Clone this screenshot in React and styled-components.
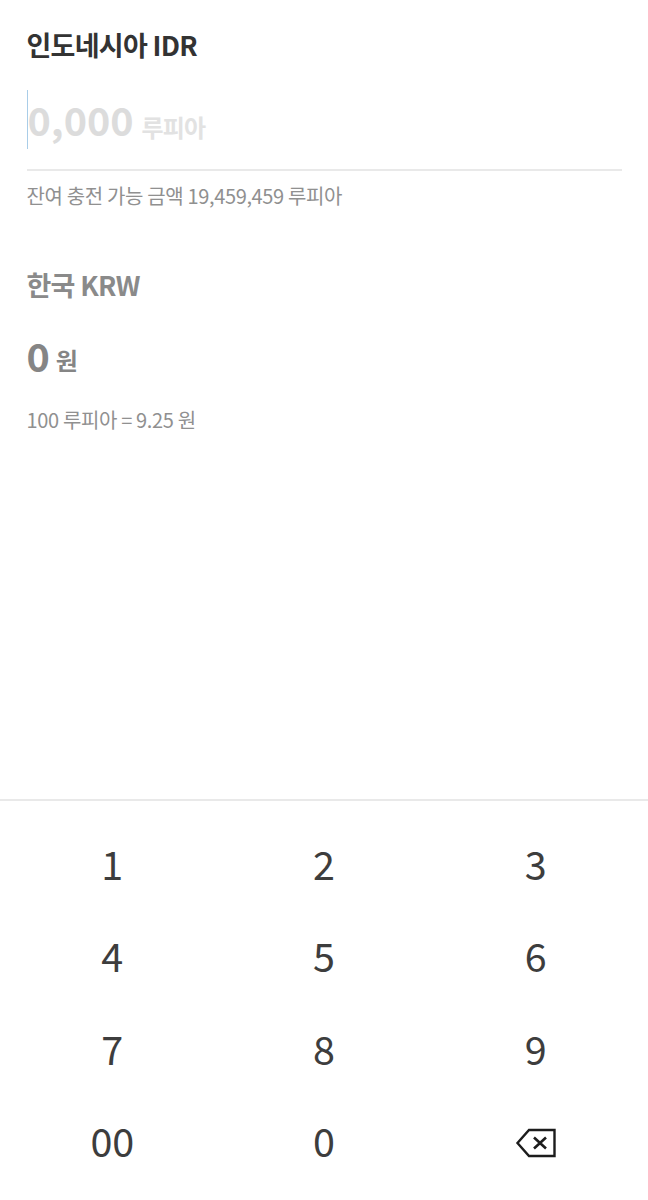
import React from "react";
import styled, { createGlobalStyle } from "styled-components";

const Global = createGlobalStyle`
  html, body { margin: 0; padding: 0; background: #fff; }
  body { font-family: "Noto Sans CJK KR", "Noto Sans", sans-serif; }
`;
const Page = styled.div`
  width: 648px; height: 1200px; display: flex; flex-direction: column; overflow: hidden;
`;
const Content = styled.section`
  flex: 1; padding: 25px 26.5px 0; display: flex; flex-direction: column;
`;
const Title = styled.h2`
  margin: 0; font-size: 27px; line-height: 40px; font-weight: 700; letter-spacing: -0.72px;
  color: ${p => p.$muted ? "#8a8a8a" : "#333"};
`;
const InputRow = styled.div`
  margin-top: 24px; height: 60px; display: flex; align-items: center;
`;
const Caret = styled.span`
  width: 1px; height: 59px; background: #a9cde8;
`;
const Amount = styled.span`
  font-size: 39.5px; line-height: 60px; font-weight: 700;
  color: ${p => p.$color}; white-space: nowrap;
`;
const Unit = styled.span`
  font-size: 24px; line-height: 60px; font-weight: 700; margin-left: ${p => p.$gap}px;
  color: ${p => p.$color}; position: relative; top: ${p => p.$drop}px; letter-spacing: -0.8px;
`;
const Divider = styled.hr`
  margin: 20px 0 0; border: 0; height: 2px; background: #e9e9e9;
`;
const Note = styled.p`
  margin: ${p => p.$top}px 0 0; font-size: 20px; line-height: 30px; color: #909090;
  letter-spacing: -0.35px; font-weight: 400;
`;
const Section = styled.div`
  margin-top: 54px;
`;
const ValueRow = styled.div`
  margin-top: 20px; height: 60px; display: flex; align-items: center;
`;
const Pad = styled.div`
  height: 401px; border-top: 2px solid #e9e9e9; box-sizing: border-box;
  display: grid; grid-template-columns: repeat(3, 1fr); grid-template-rows: repeat(4, 92.5px);
  padding: 15px 6.5px 0;
`;
const Key = styled.button`
  border: 0; background: none; padding: 0; font: inherit; font-size: 39.5px; font-weight: 400;
  color: #3d3d3d; display: flex; align-items: center; justify-content: center;
`;
const BackIcon = styled.svg`
  margin-top: 6px;
`;

const Backspace = () => (
  <BackIcon width="42" height="30" viewBox="0 0 42 30" fill="none" stroke="#1c1c1c" strokeWidth="2.4">
    <path d="M14 2H39.5V28H14L2.5 15Z" />
    <path d="M19 9.5L31 20.5M31 9.5L19 20.5" strokeWidth="2.6" />
  </BackIcon>
);

export default function App() {
  return (
    <Page>
      <Global />
      <Content>
        <Title>인도네시아 IDR</Title>
        <InputRow>
          <Caret />
          <Amount $color="#dcdcdc">0,000</Amount>
          <Unit $gap={8} $drop={8} $color="#e2e2e2">루피아</Unit>
        </InputRow>
        <Divider />
        <Note $top={10}>잔여 충전 가능 금액 19,459,459 루피아</Note>
        <Section>
          <Title $muted>한국 KRW</Title>
          <ValueRow>
            <Amount $color="#858585">0</Amount>
            <Unit $gap={6} $drop={5} $color="#858585">원</Unit>
          </ValueRow>
          <Note $top={20}>100 루피아 = 9.25 원</Note>
        </Section>
      </Content>
      <Pad>
        {["1","2","3","4","5","6","7","8","9","00","0"].map(k => <Key key={k}>{k}</Key>)}
        <Key aria-label="지우기"><Backspace /></Key>
      </Pad>
    </Page>
  );
}
